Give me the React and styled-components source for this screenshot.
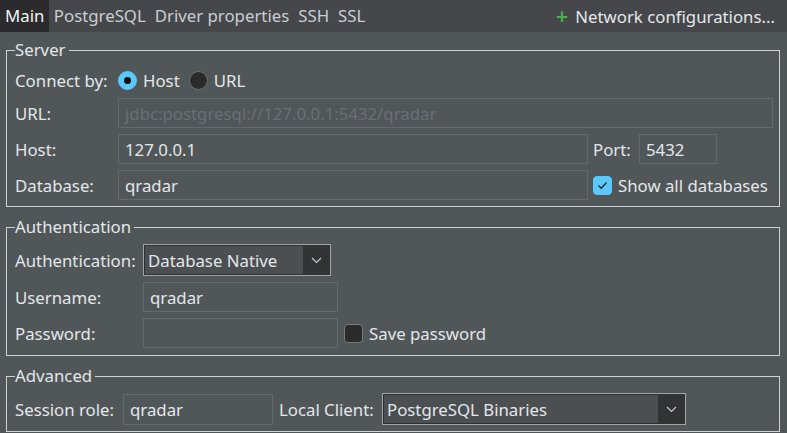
import React from 'react';
import styled, { createGlobalStyle } from 'styled-components';

const GlobalStyle = createGlobalStyle`
	body {
		margin: 0;
		background: #515659;
		font-family: 'Noto Sans', 'Open Sans', sans-serif;
		color: #e3e7ea;
	}
`;

const Page = styled.div`
	width: 787px;
	height: 433px;
	overflow: hidden;
	background: #515659;
	font-size: 16.8px;
`;

const TabBar = styled.div`
	display: flex;
	align-items: stretch;
	height: 32px;
	background: #45474a;
	padding-right: 12px;
`;

const Tab = styled.div`
	display: flex;
	align-items: center;
	padding: 0 ${(p) => (p.$active ? 5 : 4.5)}px 1px;
	background: ${(p) => (p.$active ? '#2b2b2d' : 'transparent')};
	color: ${(p) => (p.$active ? '#f0f3f5' : '#c9ced2')};
`;

const NetLink = styled.div`
	margin-left: auto;
	display: flex;
	align-items: center;
	gap: 7px;
	color: #e3e7ea;

	span.plus {
		color: #4caf50;
		font-size: 22px;
		font-weight: 600;
		line-height: 1;
		margin-bottom: 3px;
	}
`;

const Content = styled.div`
	display: flex;
	flex-direction: column;
	padding: 8px 7px 0 6px;
	gap: 10px;
`;

const Group = styled.fieldset`
	margin: 0;
	border: 1px solid #cfd1d2;
	padding: ${(p) => p.$pt || 8}px 6px ${(p) => p.$pb || 6}px 8px;
	min-width: 0;
`;

const Legend = styled.legend`
	padding: 0 3px 0 0;
	font-size: 16.8px;
	line-height: 20px;
	color: #e3e7ea;
`;

const ServerGrid = styled.div`
	display: grid;
	grid-template-columns: 103px 470px 51px 78px 1fr;
	grid-template-rows: 24px 30px 30px 30px;
	row-gap: 6px;
	align-items: center;
`;

const Label = styled.div`
	white-space: nowrap;
	padding-left: ${(p) => p.$pl || 0}px;
	width: ${(p) => (p.$w ? p.$w + 'px' : 'auto')};
	flex-shrink: 0;
`;

const Field = styled.div`
	box-sizing: border-box;
	height: ${(p) => p.$h || 30}px;
	width: ${(p) => (p.$w ? p.$w + 'px' : 'auto')};
	border: 1px solid #65696c;
	padding: 0 6px;
	display: flex;
	align-items: center;
	color: ${(p) => (p.$disabled ? '#6a6f73' : '#e3e7ea')};
	grid-column: ${(p) => p.$span || 'auto'};
	white-space: nowrap;
	overflow: hidden;
	flex-shrink: 0;
`;

const Radios = styled.div`
	grid-column: 2 / -1;
	display: flex;
	align-items: center;
	gap: 6px;
`;

const Radio = styled.span`
	box-sizing: border-box;
	width: 19px;
	height: 19px;
	border-radius: 50%;
	background: ${(p) => (p.$checked ? '#5ac8fa' : '#2b2b2b')};
	border: 1px solid ${(p) => (p.$checked ? '#5ac8fa' : '#6e7173')};
	display: flex;
	align-items: center;
	justify-content: center;
	margin-left: ${(p) => p.$ml || 0}px;

	&::after {
		content: '';
		display: ${(p) => (p.$checked ? 'block' : 'none')};
		width: 7px;
		height: 7px;
		border-radius: 50%;
		background: #111;
	}
`;

const Check = styled.span`
	box-sizing: border-box;
	width: 19px;
	height: 19px;
	border-radius: 4px;
	background: ${(p) => (p.$checked ? '#5ac8fa' : '#2b2b2b')};
	border: 1px solid ${(p) => (p.$checked ? '#5ac8fa' : '#77797b')};
	display: flex;
	align-items: center;
	justify-content: center;
	flex-shrink: 0;
`;

const CheckRow = styled.div`
	display: flex;
	align-items: center;
	gap: 6px;
	grid-column: ${(p) => p.$span || 'auto'};
	padding-left: ${(p) => p.$pl || 0}px;
	white-space: nowrap;
`;

const Row = styled.div`
	display: flex;
	align-items: center;
	gap: ${(p) => p.$gap || 0}px;
	height: ${(p) => p.$h || 30}px;
`;

const Rows = styled.div`
	display: flex;
	flex-direction: column;
	gap: 6px;
`;

const Combo = styled.div`
	box-sizing: border-box;
	height: 32px;
	width: ${(p) => p.$w}px;
	border: 1px solid #a2a5a7;
	display: flex;
	align-items: stretch;
	background: #4b4f52;
	flex-shrink: 0;
`;

const ComboText = styled.div`
	flex: 1;
	display: flex;
	align-items: center;
	padding: 0 3px;
	white-space: nowrap;
	border: 1px solid #2e2f31;
	border-right: none;
`;

const ComboArrow = styled.div`
	width: 27px;
	background: #323334;
	display: flex;
	align-items: center;
	justify-content: center;
`;

const Arrow = () => (
	<svg width="11" height="7" viewBox="0 0 11 7">
		<path d="M1 1 L5.5 5.5 L10 1" fill="none" stroke="#c8cbcd" strokeWidth="1.2" />
	</svg>
);

const Tick = () => (
	<svg width="11" height="9" viewBox="0 0 11 9">
		<path d="M1.5 4.5 L4.2 7.2 L9.5 1.5" fill="none" stroke="#1c2a33" strokeWidth="1.3" />
	</svg>
);

export default function App() {
	return (
		<Page>
			<GlobalStyle />
			<TabBar>
				<Tab $active>Main</Tab>
				<Tab>PostgreSQL</Tab>
				<Tab>Driver properties</Tab>
				<Tab>SSH</Tab>
				<Tab>SSL</Tab>
				<NetLink>
					<span className='plus'>+</span>
					<span>Network configurations...</span>
				</NetLink>
			</TabBar>
			<Content>
				<Group>
					<Legend>Server</Legend>
					<ServerGrid>
						<Label>Connect by:</Label>
						<Radios>
							<Radio $checked />
							<span>Host</span>
							<Radio $ml={3} />
							<span>URL</span>
						</Radios>

						<Label>URL:</Label>
						<Field $span='2 / -1' $disabled>jdbc:postgresql://127.0.0.1:5432/qradar</Field>

						<Label>Host:</Label>
						<Field>127.0.0.1</Field>
						<Label $pl={5}>Port:</Label>
						<Field>5432</Field>
						<div />

						<Label>Database:</Label>
						<Field>qradar</Field>
						<CheckRow $span='3 / -1' $pl={5}>
							<Check $checked>
								<Tick />
							</Check>
							<span>Show all databases</span>
						</CheckRow>
					</ServerGrid>
				</Group>

				<Group $pt={7} $pb={7}>
					<Legend>Authentication</Legend>
					<Rows>
						<Row $h={32}>
							<Label $w={128}>Authentication:</Label>
							<Combo $w={188}>
								<ComboText>Database Native</ComboText>
								<ComboArrow>
									<Arrow />
								</ComboArrow>
							</Combo>
						</Row>
						<Row>
							<Label $w={128}>Username:</Label>
							<Field $w={195}>qradar</Field>
						</Row>
						<Row $gap={6}>
							<Label $w={122}>Password:</Label>
							<Field $w={195} />
							<CheckRow>
								<Check />
								<span>Save password</span>
							</CheckRow>
						</Row>
					</Rows>
				</Group>

				<Group $pt={7} $pb={6}>
					<Legend>Advanced</Legend>
					<Row $h={32}>
						<Label $w={108}>Session role:</Label>
						<Field $w={150} $h={31}>qradar</Field>
						<Label $w={103} $pl={6}>Local Client:</Label>
						<Combo $w={304}>
							<ComboText>PostgreSQL Binaries</ComboText>
							<ComboArrow>
								<Arrow />
							</ComboArrow>
						</Combo>
					</Row>
				</Group>
			</Content>
		</Page>
	);
}
